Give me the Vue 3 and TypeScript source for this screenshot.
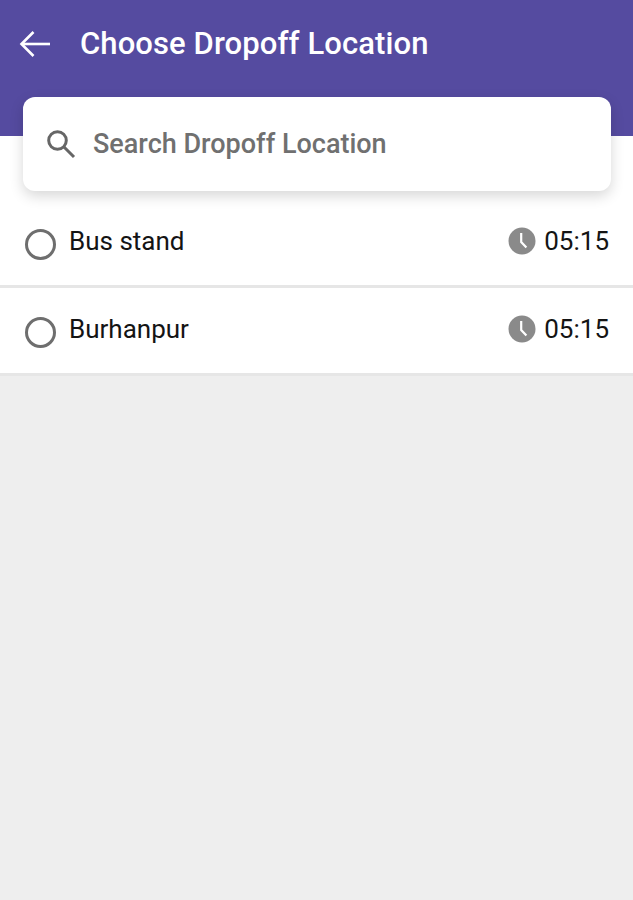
<script setup lang="ts">
interface Stop {
  name: string;
  time: string;
}

const stops: Stop[] = [
  { name: "Bus stand", time: "05:15" },
  { name: "Burhanpur", time: "05:15" },
];
</script>

<template>
  <div class="screen">
    <header class="topbar">
      <svg class="back" width="34" height="30" viewBox="0 0 34 30" fill="none" stroke="#fff" stroke-width="2.6">
        <path d="M32 15H4" />
        <path d="M15.5 3 3.5 15l12 12" />
      </svg>
      <h1 class="title">Choose Dropoff Location</h1>
    </header>

    <div class="search">
      <svg class="search-icon" width="32" height="32" viewBox="0 0 32 32" fill="none" stroke="#666" stroke-width="3">
        <circle cx="12.5" cy="12.5" r="8.8" />
        <path d="M19 19l10 10" />
      </svg>
      <span class="placeholder">Search Dropoff Location</span>
    </div>

    <ul class="stops">
      <li v-for="stop in stops" :key="stop.name" class="stop">
        <span class="radio"></span>
        <span class="name">{{ stop.name }}</span>
        <svg class="clock" width="28" height="28" viewBox="0 0 28 28">
          <circle cx="14" cy="14" r="13.5" fill="#8a8a8a" />
          <path d="M13.2 6v9l5.2 5.6" fill="none" stroke="#fff" stroke-width="2.2" />
        </svg>
        <span class="time">{{ stop.time }}</span>
      </li>
    </ul>
  </div>
</template>

<style>
html,
body {
  margin: 0;
  background: #eeeeee;
}
</style>

<style scoped>
.screen {
  height: 900px;
  overflow: hidden;
  background: #eeeeee;
  font-family: Roboto, "Liberation Sans", sans-serif;
}

.topbar {
  height: 136px;
  box-sizing: border-box;
  padding: 29px 0 0 18px;
  display: flex;
  align-items: flex-start;
  gap: 28px;
  background: #554ba0;
  color: #fff;
}

.back {
  flex: none;
}

.title {
  margin: 0;
  font-size: 31px;
  line-height: 30px;
  font-weight: 500;
  letter-spacing: 0.1px;
}

.search {
  position: relative;
  z-index: 1;
  height: 94px;
  box-sizing: border-box;
  margin: -39px 22px 0 23px;
  padding-left: 22px;
  display: flex;
  align-items: center;
  gap: 16px;
  background: #fff;
  border-radius: 12px;
  box-shadow: 0 5px 14px rgba(0, 0, 0, 0.16);
}

.placeholder {
  font-size: 27px;
  font-weight: 500;
  color: #707070;
}

.stops {
  margin: -55px 0 0;
  padding: 0;
  list-style: none;
}

.stop {
  height: 88px;
  box-sizing: border-box;
  display: flex;
  align-items: center;
  padding: 0 24px 0 25px;
  background: #fff;
  border-bottom: 3px solid #e6e6e6;
  color: #141414;
  font-size: 26px;
}

.stop:first-child {
  height: 152px;
  padding-top: 64px;
}

.radio {
  flex: none;
  width: 31px;
  height: 31px;
  box-sizing: border-box;
  margin: 4px 13px 0 0;
  border: 3px solid #6e6e6e;
  border-radius: 50%;
}

.name {
  flex: 1;
  margin-top: -4px;
}

.clock {
  flex: none;
  margin: -4px 8px 0 0;
}

.time {
  margin-top: -4px;
}
</style>
